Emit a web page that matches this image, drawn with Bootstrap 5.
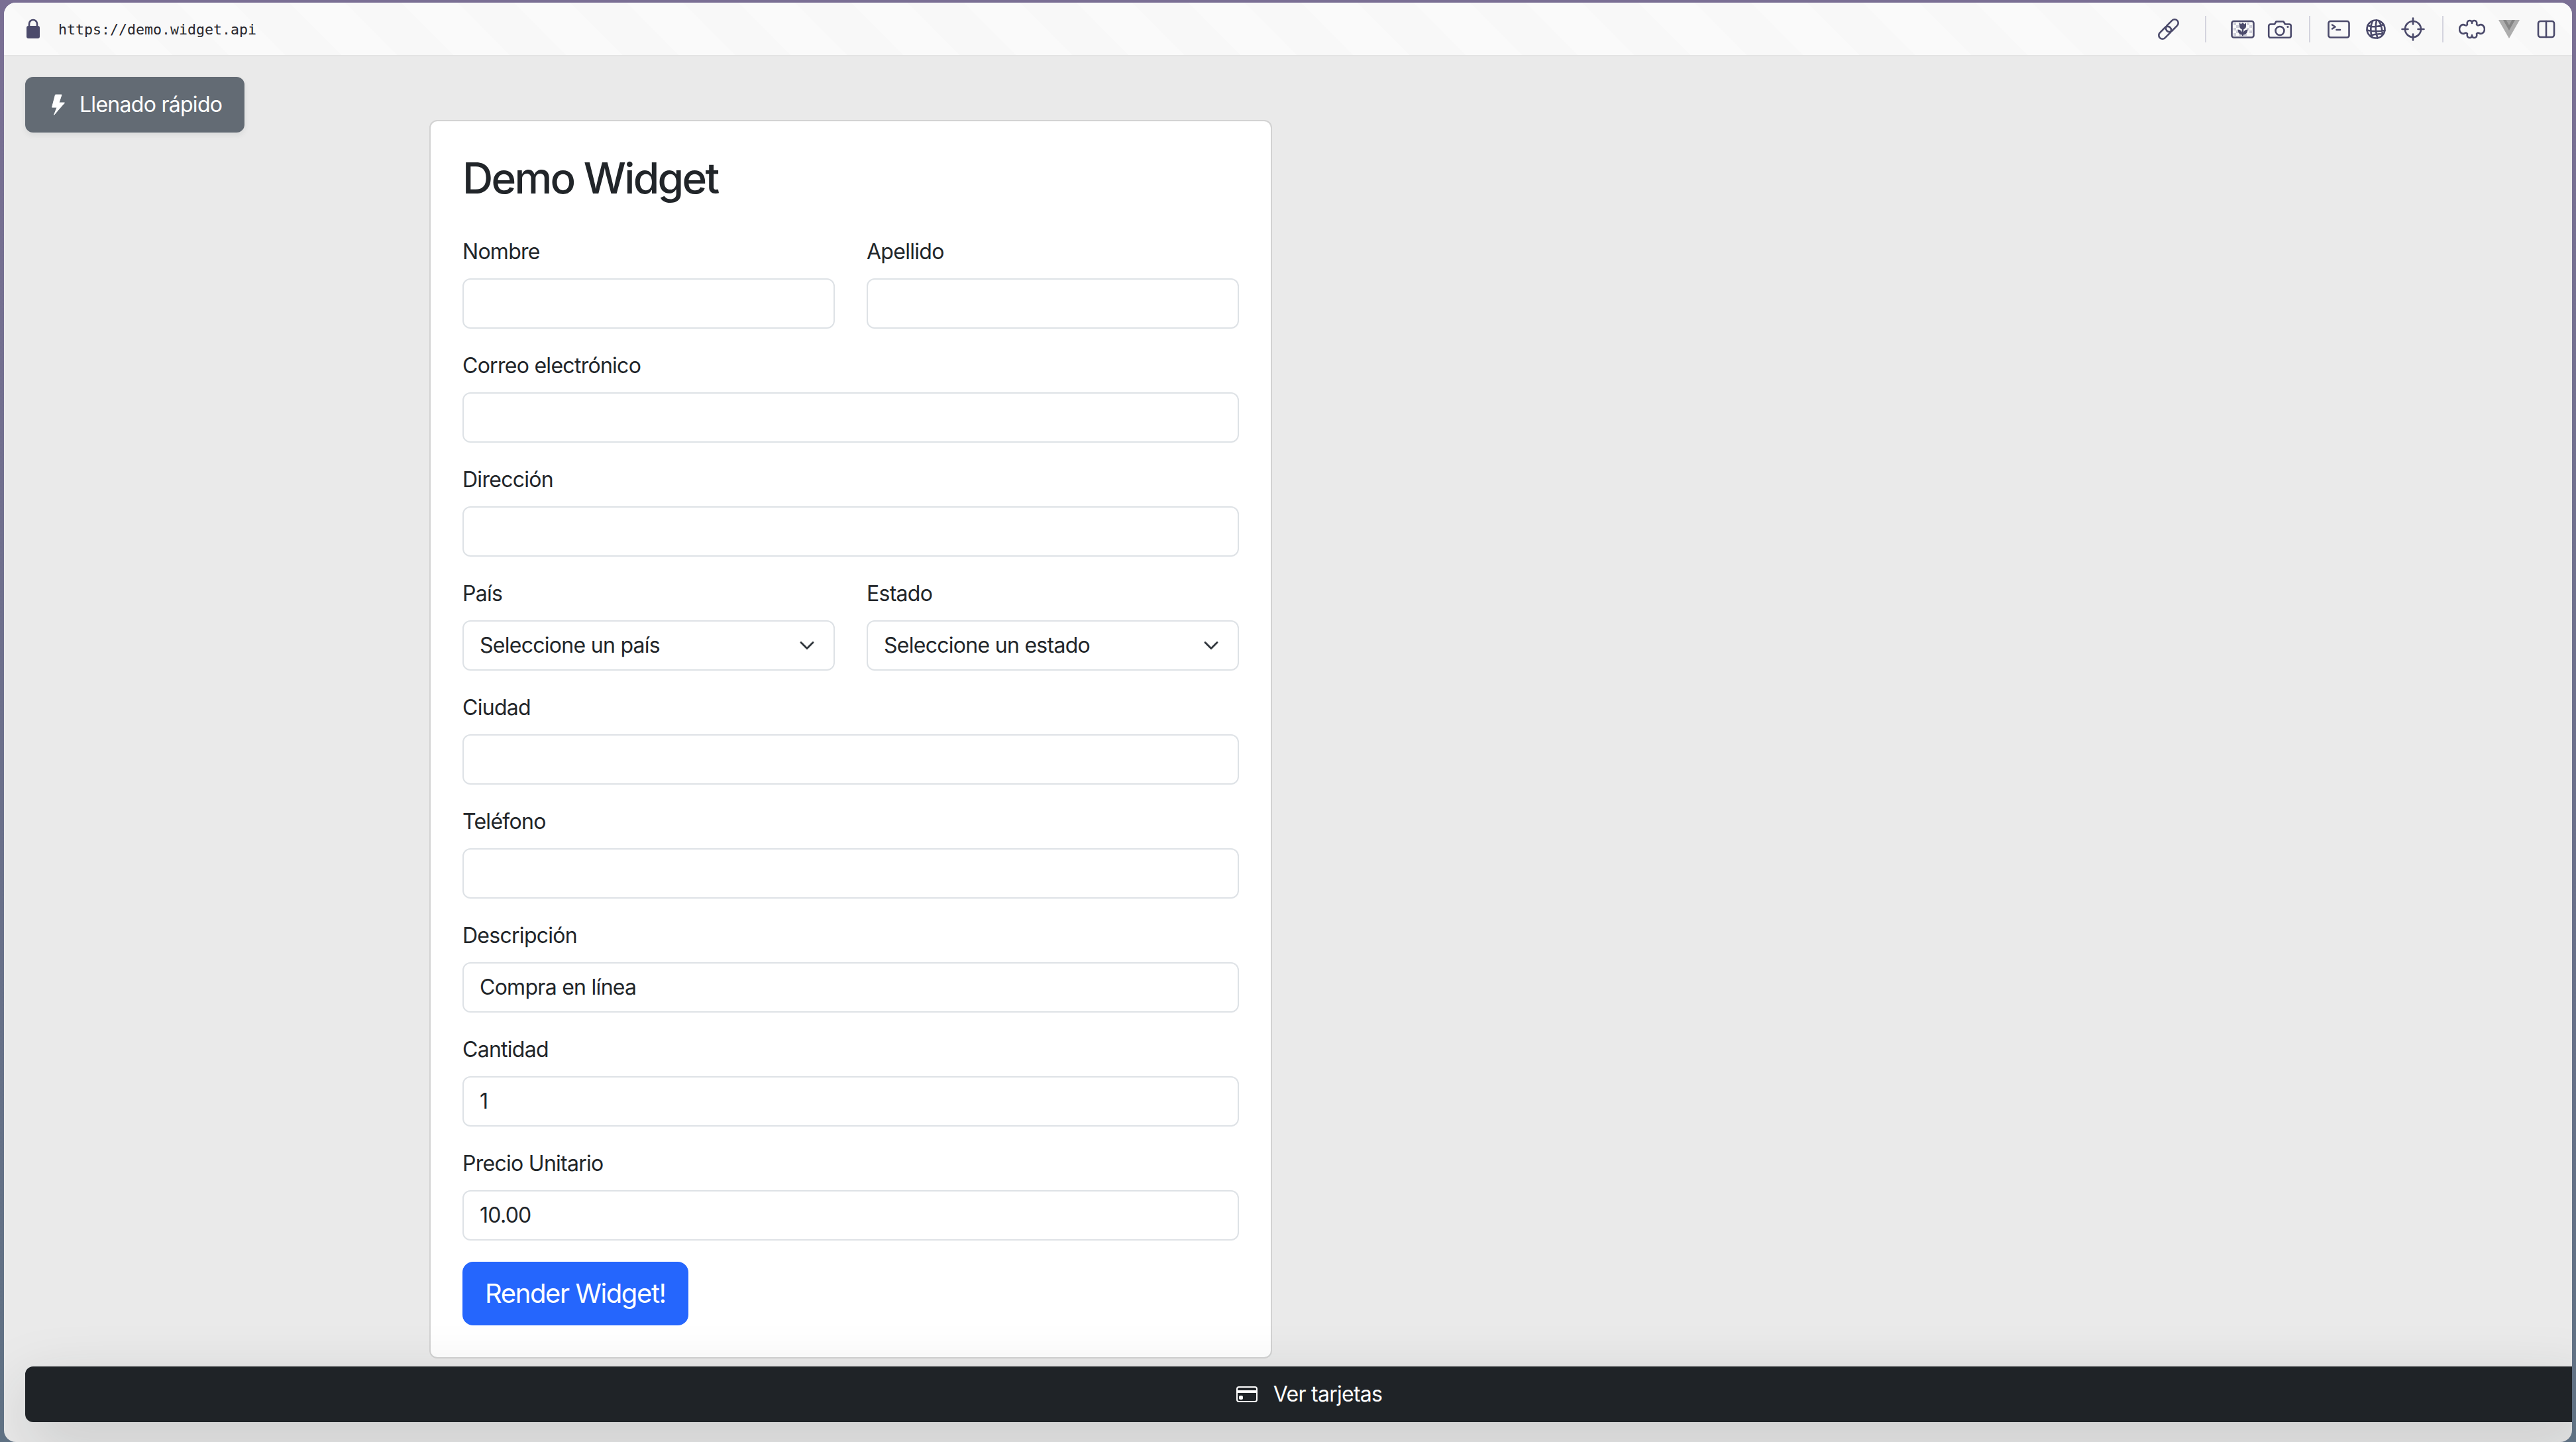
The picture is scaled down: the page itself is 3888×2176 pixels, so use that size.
<!DOCTYPE html>
<html lang="es">
<head>
  <meta charset="UTF-8" />
  <meta name="viewport" content="width=device-width, initial-scale=1" />
  <title>Demo Widget</title>
  <link href="https://cdn.jsdelivr.net/npm/bootstrap@5.3.0/dist/css/bootstrap.min.css" rel="stylesheet" />
  <style>
    /* the capture is a 2x screen, so rem and hairlines are doubled */
    html { font-size: 32px; }
    :root {
      --bs-border-width: 2px;
      --bs-body-font-family: Inter, "Liberation Sans", sans-serif;
      --bs-body-color: #212529;
    }
    body {
      height: 100vh;
      overflow: hidden;
      padding: 4px 6px 0;
      letter-spacing: -0.72px;
      background: linear-gradient(180deg, #7a6f94, #5f7183);
    }
    .form-control, .form-select, .btn { letter-spacing: -0.72px; }
    h2 { letter-spacing: -2.7px; }
    .btn-lg { letter-spacing: -1.4px; }
    .app-window {
      height: 100%;
      overflow: hidden;
      border-radius: 18px;
      background: #eaeaea;
    }
    .dev-toolbar {
      height: 81px;
      padding: 0 11px 0 24px;
      border-bottom: 2px solid #e4e4e4;
      background: repeating-linear-gradient(45deg, #fafafa 0 60px, #f8f8f8 60px 120px);
    }
    .dev-url {
      margin-left: 18px;
      padding-top: 2px;
      font-family: "DejaVu Sans Mono", "Liberation Mono", monospace;
      font-size: 21.6px;
      letter-spacing: 0;
      line-height: 1;
      color: #26262c;
    }
    .tool-slot { width: 56px; height: 40px; }
    .tool-slot svg, .lock-icon { width: 40px; height: 40px; display: block; }
    .tool-line { fill: none; stroke: #4b4a6b; stroke-width: 2.6; stroke-linecap: round; stroke-linejoin: round; }
    .tool-fill { fill: #4b4a6b; }
    .tool-sep { width: 2px; height: 40px; background: #d4d4de; }
    .tool-sep-wide { margin: 0 27px; }
    .tool-sep-tight { margin: 0 15.5px; }
    .demo-wrap { max-width: 2640px; }
    .quick-fill {
      top: 112px;
      left: 32px;
      padding: 16px 32px;
      background: #636b74;
      border-color: #636b74;
    }
    .quick-fill svg { width: 20px; height: 32px; margin: 0 22px 0 6px; vertical-align: -5px; }
    .cards-bar {
      left: 32px;
      bottom: 30px;
      width: 100%;
      padding: 16px 32px;
      background: #1f2327;
      border-color: #1f2327;
    }
    .cards-bar svg { width: 32px; height: 32px; margin-right: 24px; vertical-align: -5px; }
    .form-select { background-size: 32px 24px; }
    .btn-primary { --bs-btn-bg: #2566fd; --bs-btn-border-color: #2566fd; }
  </style>
</head>
<body>
  <div class="app-window position-relative d-flex flex-column">

    <div class="dev-toolbar d-flex align-items-center flex-shrink-0">
      <svg class="lock-icon" viewBox="0 0 40 40">
        <path class="tool-line" d="M14 17v-5a6 6 0 0 1 12 0v5" stroke-width="3" />
        <rect class="tool-fill" x="10" y="15" width="20" height="19" rx="3" />
      </svg>
      <span class="dev-url">https://demo.widget.api</span>

      <div class="d-flex align-items-center ms-auto">
        <div class="tool-slot d-flex justify-content-center">
          <svg viewBox="0 0 40 40"><g class="tool-line" transform="rotate(-45 20 20)"><rect x="1.5" y="14.5" width="22" height="11" rx="5.5" /><rect x="16.5" y="14.5" width="22" height="11" rx="5.5" /></g></svg>
        </div>
        <div class="tool-sep tool-sep-wide"></div>
        <div class="tool-slot d-flex justify-content-center">
          <svg viewBox="0 0 40 40">
            <path fill="#cfcfda" d="M6 10h4v4H6zM14 10h4v4h-4zM26 10h4v4h-4zM10 14h4v4h-4zM30 14h4v4h-4zM6 18h4v4H6zM26 18h4v4h-4zM10 22h4v4h-4zM30 22h4v4h-4zM6 26h4v4H6zM14 27h4v3h-4zM22 27h4v3h-4z" />
            <rect class="tool-line" x="3.5" y="8" width="33" height="24.5" rx="3" />
            <path class="tool-fill" d="M15 10.5l2.5 2 2.5-2.5 2.5 2.5 2.5-2v5a5 5 0 0 1-10 0z" />
            <path class="tool-line" d="M20 20v9" />
            <path class="tool-fill" d="M12.5 20.5c4 0 7 3 7.5 8-4.500 0-7.500-3-7.500-8zM27.500 20.500c-4 0-7 3-7.500 8 4.500 0 7.500-3 7.500-8z" />
          </svg>
        </div>
        <div class="tool-slot d-flex justify-content-center">
          <svg viewBox="0 0 40 40">
            <path class="tool-line" d="M6 12.500h6l2.500-4h11l2.500 4h6a2.800 2.800 0 0 1 2.800 2.800V30a2.800 2.800 0 0 1-2.800 2.800H6A2.800 2.800 0 0 1 3.200 30V15.300A2.800 2.800 0 0 1 6 12.500z" />
            <circle class="tool-line" cx="20" cy="22.500" r="6.500" />
            <circle class="tool-fill" cx="32" cy="16.500" r="1.600" />
          </svg>
        </div>
        <div class="tool-sep tool-sep-tight"></div>
        <div class="tool-slot d-flex justify-content-center">
          <svg viewBox="0 0 40 40">
            <rect class="tool-line" x="4.500" y="8" width="31" height="24.500" rx="3" />
            <path class="tool-line" d="M10 13.500l4.500 3-4.500 3M16.500 21h5.500" />
          </svg>
        </div>
        <div class="tool-slot d-flex justify-content-center">
          <svg viewBox="0 0 40 40">
            <circle class="tool-line" cx="20" cy="20" r="13.500" />
            <path class="tool-line" stroke-width="2" d="M15 7.500c-3 6-4 17-.5 25M24 7c3.500 5 5.500 12 6 22M7.500 14.500c7 3 17 2 24-1.500M6.500 21.500c8 2.500 18 2 27 .5M11 30c6-2.500 13-3 19-2.500M21 6.500c-2 8-1.500 18 1.500 27" />
          </svg>
        </div>
        <div class="tool-slot d-flex justify-content-center">
          <svg viewBox="0 0 40 40">
            <circle class="tool-line" cx="20" cy="20" r="12" />
            <path class="tool-line" d="M20 3.500v9M20 27.500v9M3.500 20h9M27.500 20h9" />
          </svg>
        </div>
        <div class="tool-sep tool-sep-tight"></div>
        <div class="tool-slot d-flex justify-content-center">
          <svg viewBox="0 0 40 40">
            <path class="tool-line" d="M13 13C12 9 14 7 16.500 7C19 7 20 9 20 11C20 9 21 7 23.500 7C26 7 28 9 27 13C28 14.500 29 15 30.500 14C35 11.500 39 15.500 39 20C39 24.500 35 28.500 30.500 26C29 25 28 25.500 27 27C28 31 26 33 23.500 33C21 33 20 31 20 29C20 31 19 33 16.500 33C14 33 12 31 13 27C12 25.500 11 25 9.500 26C5 28.500 1 24.500 1 20C1 15.500 5 11.500 9.500 14C11 15 12 14.500 13 13Z" />
          </svg>
        </div>
        <div class="tool-slot d-flex justify-content-center">
          <svg viewBox="0 0 40 40">
            <path fill="#adadad" d="M4 6h32L20 34z" />
            <path fill="#858585" d="M11 6h18l-9 16z" />
            <path fill="#a2a2a2" d="M15.500 6h9L20 14z" />
          </svg>
        </div>
        <div class="tool-slot d-flex justify-content-center">
          <svg viewBox="0 0 40 40">
            <rect class="tool-line" x="8" y="8" width="24" height="24" rx="3.500" />
            <path class="tool-line" d="M20 8v24" />
          </svg>
        </div>
      </div>
    </div>

    <button type="button" class="btn btn-secondary quick-fill position-absolute shadow-sm">
      <svg viewBox="0 0 20 32"><path fill="currentColor" stroke="currentColor" stroke-linejoin="round" d="M5.500 1h9.500l-4 12h8.500L3.500 31.500 8 20H.5z" /></svg>Llenado rápido
    </button>

    <div class="container demo-wrap mt-5">
      <div class="row">
        <div class="col-6">
          <div class="card">
            <div class="card-body p-4">
              <h2 class="mb-4">Demo Widget</h2>
              <form>
                <div class="row">
                  <div class="col-6 mb-3">
                    <label class="form-label" for="nombre">Nombre</label>
                    <input class="form-control" id="nombre" type="text" />
                  </div>
                  <div class="col-6 mb-3">
                    <label class="form-label" for="apellido">Apellido</label>
                    <input class="form-control" id="apellido" type="text" />
                  </div>
                </div>
                <div class="mb-3">
                  <label class="form-label" for="correo">Correo electrónico</label>
                  <input class="form-control" id="correo" type="email" />
                </div>
                <div class="mb-3">
                  <label class="form-label" for="direccion">Dirección</label>
                  <input class="form-control" id="direccion" type="text" />
                </div>
                <div class="row">
                  <div class="col-6 mb-3">
                    <label class="form-label" for="pais">País</label>
                    <select class="form-select" id="pais"><option>Seleccione un país</option></select>
                  </div>
                  <div class="col-6 mb-3">
                    <label class="form-label" for="estado">Estado</label>
                    <select class="form-select" id="estado"><option>Seleccione un estado</option></select>
                  </div>
                </div>
                <div class="mb-3">
                  <label class="form-label" for="ciudad">Ciudad</label>
                  <input class="form-control" id="ciudad" type="text" />
                </div>
                <div class="mb-3">
                  <label class="form-label" for="telefono">Teléfono</label>
                  <input class="form-control" id="telefono" type="text" />
                </div>
                <div class="mb-3">
                  <label class="form-label" for="descripcion">Descripción</label>
                  <input class="form-control" id="descripcion" type="text" value="Compra en línea" />
                </div>
                <div class="mb-3">
                  <label class="form-label" for="cantidad">Cantidad</label>
                  <input class="form-control" id="cantidad" type="text" value="1" />
                </div>
                <div class="mb-3">
                  <label class="form-label" for="precio">Precio Unitario</label>
                  <input class="form-control" id="precio" type="text" value="10.00" />
                </div>
                <button type="button" class="btn btn-primary btn-lg">Render Widget!</button>
              </form>
            </div>
          </div>
        </div>
      </div>
    </div>

    <button type="button" class="btn btn-dark cards-bar position-absolute shadow-lg">
      <svg viewBox="0 0 16 16" fill="currentColor"><path d="M0 4a2 2 0 0 1 2-2h12a2 2 0 0 1 2 2v8a2 2 0 0 1-2 2H2a2 2 0 0 1-2-2V4zm2-1a1 1 0 0 0-1 1v1h14V4a1 1 0 0 0-1-1H2zm13 4H1v5a1 1 0 0 0 1 1h12a1 1 0 0 0 1-1V7z" /><path d="M2 10a1 1 0 0 1 1-1h1a1 1 0 0 1 1 1v1a1 1 0 0 1-1 1H3a1 1 0 0 1-1-1v-1z" /></svg>Ver tarjetas
    </button>
  </div>
  <script src="https://cdn.jsdelivr.net/npm/bootstrap@5.3.0/dist/js/bootstrap.bundle.min.js"></script>
</body>
</html>
